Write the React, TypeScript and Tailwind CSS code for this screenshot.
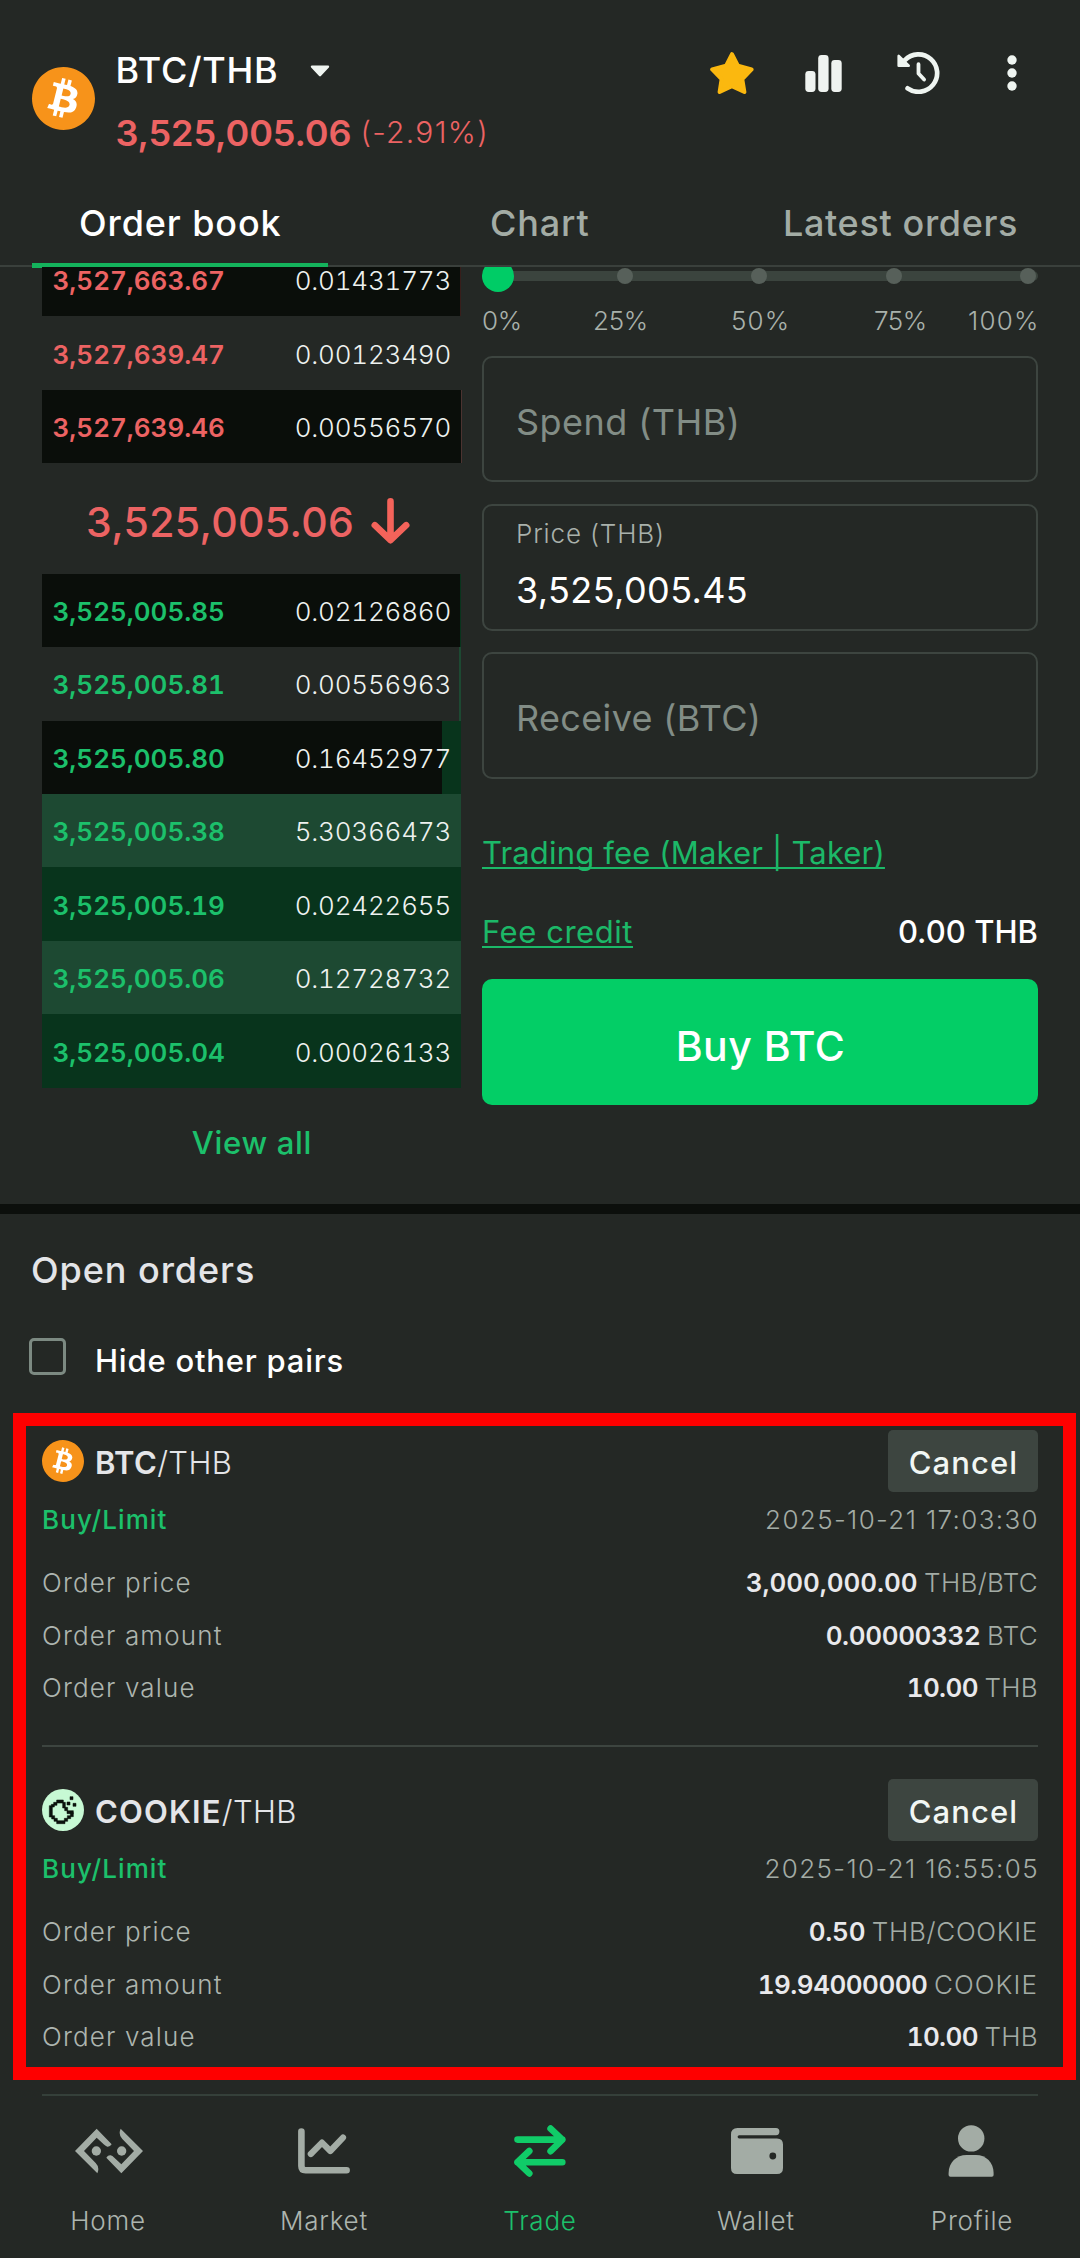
import { ReactNode } from "react";
import { SiBitcoin } from "react-icons/si";

type BookRow = { price: string; amount: string; depth: number };

// sell side of the book, the first row is partly scrolled under the tabs
const asks: BookRow[] = [
  { price: "3,527,663.67", amount: "0.01431773", depth: 0.3 },
  { price: "3,527,639.47", amount: "0.00123490", depth: 0 },
  { price: "3,527,639.46", amount: "0.00556570", depth: 0.1 },
];

const bids: BookRow[] = [
  { price: "3,525,005.85", amount: "0.02126860", depth: 0.3 },
  { price: "3,525,005.81", amount: "0.00556963", depth: 0.4 },
  { price: "3,525,005.80", amount: "0.16452977", depth: 4.5 },
  { price: "3,525,005.38", amount: "5.30366473", depth: 100 },
  { price: "3,525,005.19", amount: "0.02422655", depth: 100 },
  { price: "3,525,005.06", amount: "0.12728732", depth: 100 },
  { price: "3,525,005.04", amount: "0.00026133", depth: 100 },
];

const steps = [
  { label: "0%", style: "w-[111px] tracking-[-0.2px]" },
  { label: "25%", style: "w-[138px] tracking-[-0.3px]" },
  { label: "50%", style: "w-[143px] tracking-[1.1px]" },
  { label: "75%", style: "w-[94px] tracking-[-0.5px]" },
  { label: "100%", style: "tracking-[1.2px]" },
];

const orders = [
  {
    coin: "BTC",
    icon: <BitcoinLogo className="size-[42px]" />,
    date: "2025-10-21 17:03:30",
    titleStyle: "tracking-[0.4px]",
    rows: [
      { label: "Order price", value: "3,000,000.00", valueStyle: "tracking-[-0.05px]", unit: "THB/BTC", unitStyle: "tracking-[0.3px]" },
      { label: "Order amount", value: "0.00000332", valueStyle: "tracking-[-0.35px]", unit: "BTC", unitStyle: "tracking-[0.3px]" },
      { label: "Order value", value: "10.00", valueStyle: "tracking-[-0.6px]", unit: "THB", unitStyle: "tracking-[0.3px]" },
    ],
  },
  {
    coin: "COOKIE",
    icon: <CookieLogo />,
    date: "2025-10-21 16:55:05",
    titleStyle: "tracking-[1.2px]",
    rows: [
      { label: "Order price", value: "0.50", valueStyle: "tracking-[-0.2px]", unit: "THB/COOKIE", unitStyle: "tracking-[0.7px]" },
      { label: "Order amount", value: "19.94000000", valueStyle: "tracking-[-0.5px]", unit: "COOKIE", unitStyle: "tracking-[1.1px]" },
      { label: "Order value", value: "10.00", valueStyle: "tracking-[-0.6px]", unit: "THB", unitStyle: "tracking-[0.3px]" },
    ],
  },
];

function BitcoinLogo({ className }: { className: string }) {
  return (
    <div className={`${className} shrink-0 rounded-full bg-white bg-clip-content p-px`}>
      <SiBitcoin className="-m-px size-[calc(100%+2px)] text-[#f7931a]" />
    </div>
  );
}

function CookieLogo() {
  return (
    <svg viewBox="36 27 126 126" className="size-[42px] shrink-0">
      <circle cx="99" cy="90" r="63" fill="#c7f9d4" />
      <path
        fill="#0b120d"
        stroke="#0b120d"
        strokeWidth="1.6"
        d="M80 60h20v9h-20zM71 67h10v9h-10zM98 67h8v17h-8zM58 77h9v34h-9zM64 73h9v8h-9zM104 82h9v10h-9zM111 92h19v9h-19zM121 98h9v12h-9zM65 107h9v10h-9zM112 107h10v9h-10zM72 115h10v9h-10zM103 115h10v9h-10zM80 122h25v9h-25zM120 50h9v9h-9zM111 66h9v9h-9zM129 70h9v9h-9z"
      />
    </svg>
  );
}

function HomeIcon() {
  const half =
    "M110 57L155 104Q150 112 142 111Q137 110 131 104L110 84L72 124L107 160Q115 168 115 178Q115 185 112 191L45 124Z";
  return (
    <svg viewBox="45 56 204 136" className="ml-[2px] h-[46px] w-[68px]" fill="#a3aca5">
      <path d={half} />
      <path d={half} transform="rotate(180 147 124)" />
      <circle cx="109" cy="124" r="14" />
      <circle cx="185" cy="124" r="14" />
    </svg>
  );
}

function MarketIcon() {
  return (
    <svg viewBox="0 0 52 46" className="h-[46px] w-[52px]" fill="none" stroke="#a3aca5" strokeWidth="6.6" strokeLinecap="round" strokeLinejoin="round">
      <path d="M3.4 3.6V38q0 4.2 4.2 4.2H48.6" />
      <path d="M12.8 26L24 14.6L32.3 23L45 9.6" strokeWidth="6.2" />
    </svg>
  );
}

function TradeIcon() {
  return (
    <svg viewBox="0 0 52 52" className="size-[52px]" fill="none" stroke="#10cc68" strokeWidth="6.6" strokeLinecap="round" strokeLinejoin="round">
      <path d="M3.5 14.6H48.3M36.6 3.6L48.3 14.6L36.6 26.2" />
      <path d="M48.3 37.2H3.5M15.3 26L3.5 37.2L15.3 48.4" />
    </svg>
  );
}

function WalletIcon() {
  return (
    <svg viewBox="0 0 52 46" className="ml-[2px] h-[46px] w-[52px]">
      <path
        fill="#a3aca5"
        d="M6.5 0H45q3.4 0 3.4 3.5T45 7.2H8.2Q6.6 7.2 6.6 8.8T8.2 10.4H46Q52 10.4 52 16.4V40Q52 46 46 46H6Q0 46 0 40V6.5Q0 0 6.5 0Z"
      />
      <circle cx="41.8" cy="28" r="3.4" fill="#242825" />
    </svg>
  );
}

function ProfileIcon() {
  return (
    <svg viewBox="0 0 46 52" className="mr-[2px] h-[52px] w-[46px]" fill="#a3aca5">
      <circle cx="23.2" cy="13.4" r="13.2" />
      <path d="M.6 48C.6 37.5 8.5 30 18.5 30H28C38 30 45.6 37.5 45.6 48V50Q45.6 51.8 43.8 51.8H2.4Q.6 51.8 .6 50Z" />
    </svg>
  );
}

const Header = () => (
  <header className="flex h-[178px] items-start pt-12 pl-8">
    <BitcoinLogo className="mt-[19px] size-[63px]" />
    <div className="ml-[20.5px]">
      <div className="flex h-[43px] items-center">
        <span className="text-[36px] font-medium tracking-[0.75px] text-white">BTC/THB</span>
        <svg viewBox="0 0 20 12" className="mt-0.5 ml-[31.5px] h-3 w-5">
          <path d="M2 1.6H18L10 10.2Z" fill="#eff5f1" stroke="#eff5f1" strokeWidth="2.4" strokeLinejoin="round" />
        </svg>
      </div>
      <div className="mt-[20px] flex h-[43px] items-center text-[#ec6363]">
        <span className="text-[36px] font-semibold tracking-[-0.1px]">3,525,005.06</span>
        <span className="ml-[9px] text-[30px] font-light tracking-[1.3px]">(-2.91%)</span>
      </div>
    </div>
    <div className="mr-[63.5px] ml-auto flex h-[50px] items-center">
      <svg viewBox="0 0 44 42" className="h-[42px] w-[44px]">
        <path
          d="M22 2.2L28 13.8L41.6 17.4L32.3 27.2L34.4 40L21.9 34.2L9.6 40L11.6 27.2L2.2 17.4L16 13.8Z"
          fill="#fbb80f"
          stroke="#fbb80f"
          strokeWidth="4"
          strokeLinejoin="round"
        />
      </svg>
      <svg viewBox="0 0 37 37" className="ml-[51px] size-[37px]" fill="#eff3f0">
        <rect x=".3" y="16" width="10.2" height="21" rx="3.4" />
        <rect x="13.2" y="0" width="10.4" height="37" rx="3.4" />
        <rect x="26.3" y="5" width="10.4" height="32" rx="3.4" />
      </svg>
      <svg viewBox="-21.5 -21 43 42" className="ml-[55px] h-[42px] w-[43px]" fill="none" stroke="#eff5f1" strokeLinecap="round" strokeLinejoin="round">
        <path d="M-10.9 15.3A18.7 18.7 0 1 0 -13.6 -12.8" strokeWidth="4.7" />
        <path d="M-19.8 -17V-7.3H-9.8Z" fill="#eff5f1" strokeWidth="2.6" />
        <path d="M0 -8.8V.4L5.6 6.6" strokeWidth="3.8" />
      </svg>
      <svg viewBox="0 0 10 36" className="ml-[67px] h-9 w-[10px]" fill="#eff5f1">
        <circle cx="5" cy="5" r="4.7" />
        <circle cx="5" cy="18" r="4.7" />
        <circle cx="5" cy="31" r="4.7" />
      </svg>
    </div>
  </header>
);

const Tabs = () => (
  <div className="flex h-[89px] border-b-[2.5px] border-[#3a403c] pl-8 text-[36px] leading-[44px] font-medium">
    <div className="relative w-[296px] pt-[23px] pl-[47px] text-white">
      <span className="tracking-[0.9px]">Order book</span>
      {/* indicator sits on top of the bottom line */}
      <div className="absolute -bottom-[2.5px] left-0 h-[5px] w-full bg-[#14b35c]" />
    </div>
    <span className="ml-[162px] pt-[23px] tracking-[0.87px] text-[#a3aca5]">Chart</span>
    <span className="mr-[62px] ml-auto pt-[23px] tracking-[0.63px] text-[#a3aca5]">Latest orders</span>
  </div>
);

const Row = ({ row, dark, sell }: { row: BookRow; dark: boolean; sell?: boolean }) => (
  <div
    className={`relative flex h-[73.43px] items-center justify-between pt-[3px] pr-[10px] pl-[10.5px] text-[26px] leading-6 tabular-nums ${
      dark ? "bg-[#0a0e0a]" : ""
    }`}
  >
    {/* depth bar */}
    <div
      className={`absolute inset-y-0 right-0 ${sell ? "bg-[#f06161]/20" : "bg-[#00cc66]/20"}`}
      style={{ width: `${row.depth}%` }}
    />
    <span className={`relative font-semibold ${sell ? "text-[#ec6363]" : "text-[#1cc06b]"}`}>{row.price}</span>
    <span className="relative font-light tracking-[-0.2px] text-[#eef2f0]">{row.amount}</span>
  </div>
);

const OrderBook = () => (
  <div className="ml-[42px] w-[419px]">
    <div className="-mt-6">
      {asks.map((row, i) => (
        <Row key={row.price} row={row} dark={i % 2 === 0} sell />
      ))}
    </div>
    <div className="flex h-[110.5px] items-center pt-[5px] pl-[44px] text-[#ec6363]">
      <span className="pt-[3px] text-[41px] font-medium tracking-[0.36px]">3,525,005.06</span>
      <svg viewBox="0 0 39 46" className="ml-[16.5px] h-[46px] w-[39px]" fill="none" stroke="#f4635a" strokeWidth="6.6" strokeLinecap="round" strokeLinejoin="round">
        <path d="M19.5 3.4V42M3.8 27.2L19.5 42.2L35.2 27.2" />
      </svg>
    </div>
    {bids.map((row, i) => (
      <Row key={row.price} row={row} dark={i % 2 === 0} />
    ))}
    <div className="mt-[35.5px] pl-[1px] text-center text-[31px] leading-10 font-medium tracking-[0.7px] text-[#1cc06b]">
      View all
    </div>
  </div>
);

const Field = ({ children }: { children: ReactNode }) => (
  <div className="mb-[21.8px] flex h-[126.4px] flex-col justify-center rounded-[10px] border-[2.5px] border-[#3d4540] pt-[5px] pl-8">
    {children}
  </div>
);

const OrderForm = () => (
  <div className="mr-[42px] ml-auto w-[556px]">
    {/* amount slider */}
    <div className="relative -mt-[7px] flex h-8 items-center">
      <div className="h-[10px] w-full rounded-full bg-[#3b443e]" />
      <div className="absolute inset-x-0 flex items-center justify-between pr-[2px]">
        <div className="-mr-4 h-8 w-8 rounded-full bg-[#00cc66]" />
        <div className="size-4 rounded-full bg-[#57605a]" />
        <div className="size-4 rounded-full bg-[#57605a]" />
        <div className="size-4 rounded-full bg-[#57605a]" />
        <div className="size-4 rounded-full bg-[#57605a]" />
      </div>
    </div>
    <div className="mt-[13px] mb-[19px] flex text-[26px] leading-8 font-light text-[#a9b1ab]">
      {steps.map((s) => (
        <span key={s.label} className={`shrink-0 ${s.style}`}>
          {s.label}
        </span>
      ))}
    </div>
    <Field>
      <span className="text-[36px] font-normal tracking-[0.45px] text-[#828d86]">Spend (THB)</span>
    </Field>
    <Field>
      <span className="-mt-[16px] text-[26px] leading-8 font-light tracking-[0.84px] text-[#a9b1ab]">Price (THB)</span>
      <span className="mt-[24px] text-[36px] leading-8 font-normal tracking-[0.4px] text-white">3,525,005.45</span>
    </Field>
    <Field>
      <span className="text-[36px] font-normal tracking-[0.35px] text-[#828d86]">Receive (BTC)</span>
    </Field>
    <div className="mt-[54px] text-[31px] leading-10 font-normal text-[#1cb868]">
      <span className="tracking-[0.17px] underline decoration-2 underline-offset-[3px] [text-decoration-skip-ink:none]">
        Trading fee (Maker | Taker)
      </span>
    </div>
    <div className="mt-[39px] flex justify-between text-[31px] leading-10">
      <span className="font-normal tracking-[0.55px] text-[#1cb868] underline decoration-2 underline-offset-[3px]">
        Fee credit
      </span>
      <span className="font-medium tracking-[0.05px] text-white">0.00 THB</span>
    </div>
    <button className="mt-[27.5px] flex h-[126px] w-full items-center justify-center rounded-[10px] bg-[#03ce66] pt-[8px] pl-px text-[41px] font-medium tracking-[0.46px] text-white">
      Buy BTC
    </button>
  </div>
);

const OpenOrders = () => (
  <section>
    <h2 className="pt-[33.5px] pl-[31px] text-[36px] leading-[44px] font-medium tracking-[0.94px] text-[#e4e5e8]">
      Open orders
    </h2>
    <label className="mt-[47px] flex h-11 items-center pl-[29px]">
      <div className="mb-2 size-[37px] rounded-[5px] border-[3.5px] border-[#7c8a82]" />
      <span className="ml-[29px] pt-[2px] text-[31px] font-medium tracking-[0.78px] text-white">Hide other pairs</span>
    </label>
    {/* highlighted list */}
    <div className="mt-[30.5px] ml-[12.5px] h-[667px] w-[1063px] border-[13px] border-[#fe0000] pt-1 pr-[24.5px] pl-[16.5px]">
      {orders.map((order, i) => (
        <div key={order.coin} className={i > 0 ? "mt-[41px] border-t-[2.5px] border-[#3d4540] pt-[32px]" : ""}>
          <div className="flex h-[62px] items-center text-[31px]">
            {order.icon}
            <div className="ml-[11px] pt-[4px] text-[#e4e5e8]">
              <span className={`font-semibold ${order.titleStyle}`}>{order.coin}</span>
              <span className="font-light tracking-[0.35px]">/THB</span>
            </div>
            <button className="ml-auto flex h-[62px] w-[150px] items-center justify-center rounded-[5px] bg-[#3d4540] pt-[4px] pl-px font-medium tracking-[1.1px] text-[#f2f7f4]">
              Cancel
            </button>
          </div>
          <div className="mt-[12px] mb-[31px] flex justify-between text-[26px] leading-8">
            <span className="font-medium tracking-[1.1px] text-[#1cc06b]">Buy/Limit</span>
            <span className="-mr-px font-light tracking-[1.36px] text-[#a3aca5]">{order.date}</span>
          </div>
          <div className="flex flex-col gap-[20.5px] text-[26px] leading-8">
            {order.rows.map((r) => (
              <div key={r.label} className="flex">
                <span className="font-light tracking-[1.15px] text-[#adb5af]">{r.label}</span>
                <span className={`ml-auto font-semibold text-[#e9e9ec] tabular-nums ${r.valueStyle}`}>{r.value}</span>
                <span className={`ml-[6.5px] font-light text-[#a3aca5] ${r.unitStyle}`}>{r.unit}</span>
              </div>
            ))}
          </div>
        </div>
      ))}
    </div>
    <div className="mx-[42px] mt-[13.5px] h-[2.5px] bg-[#35403a]" />
  </section>
);

const NavItem = ({ icon, label, active }: { icon: ReactNode; label: string; active?: boolean }) => (
  <div className="flex w-[216px] flex-col items-center">
    <div className="flex h-14 items-center">{icon}</div>
    <span
      className={`mt-[26px] text-[26px] leading-8 font-light tracking-[0.8px] ${
        active ? "text-[#1cc06b]" : "text-[#adb5af]"
      }`}
    >
      {label}
    </span>
  </div>
);

export default function App() {
  return (
    <div className="flex h-[2258px] w-[1080px] flex-col overflow-hidden bg-[#242825] font-['Inter',sans-serif]">
      <Header />
      <Tabs />
      <main className="flex h-[936.5px] overflow-hidden">
        <OrderBook />
        <OrderForm />
      </main>
      <div className="h-[10.5px] bg-[#0c0f0c]" />
      <OpenOrders />
      <nav className="flex pt-[27px]">
        <NavItem icon={<HomeIcon />} label="Home" />
        <NavItem icon={<MarketIcon />} label="Market" />
        <NavItem icon={<TradeIcon />} label="Trade" active />
        <NavItem icon={<WalletIcon />} label="Wallet" />
        <NavItem icon={<ProfileIcon />} label="Profile" />
      </nav>
    </div>
  );
}
